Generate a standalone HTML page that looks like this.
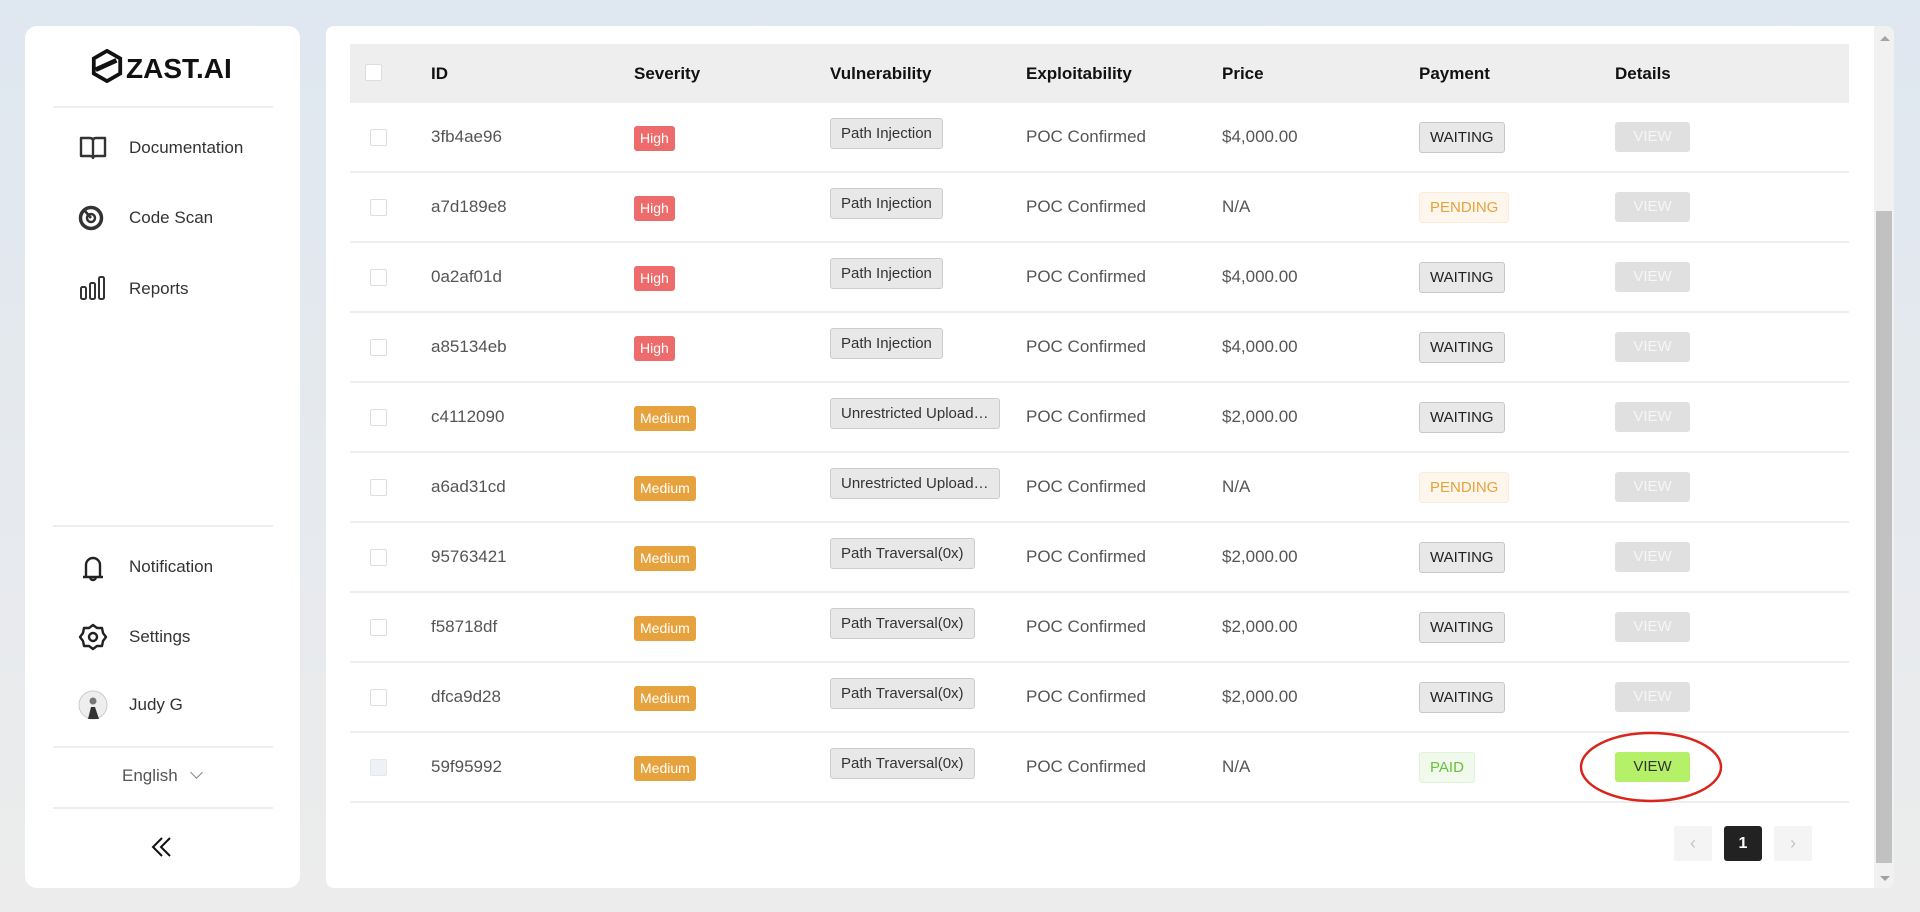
<!DOCTYPE html>
<html><head><meta charset="utf-8"><style>
*{box-sizing:border-box;margin:0;padding:0}
body{width:1920px;height:912px;overflow:hidden;background:linear-gradient(#dfe7f0,#ececec);font-family:"Liberation Sans",sans-serif;color:#333;position:relative}
.side{position:absolute;left:25px;top:26px;width:275px;height:862px;background:#fff;border-radius:12px}
.hr{position:absolute;left:28px;width:220px;height:2px;background:#eceef1}
.item{position:absolute;left:0;width:275px;height:30px;font-size:17px;color:#333}
.item .ic{position:absolute;left:53px;top:0;width:30px;height:30px}
.item span{position:absolute;left:104px;top:5px}
.main{position:absolute;left:326px;top:26px;width:1568px;height:862px;background:#fff;border-radius:8px;overflow:hidden}
.thead{position:absolute;left:24px;top:18px;width:1499px;height:59px;background:#eeeeee}
.th{position:absolute;top:20px;font-weight:bold;font-size:17px;color:#111}
.row{position:absolute;left:24px;width:1499px;height:70px;border-bottom:2px solid #eeeeee;font-size:17px;color:#555}
.cell{position:absolute;top:24px}
.cb{position:absolute;left:20px;top:26px;width:17px;height:17px;border:1px solid #ddd;border-radius:2px;background:#fff}
.sev{position:absolute;left:284px;top:23px;height:25px;padding:0 6px;border-radius:3px;color:#fff;font-size:14px;line-height:25px}
.vul{position:absolute;left:480px;top:15px;height:31px;padding:0 10px;border:1px solid #ccc;border-radius:3px;background:#e8e8e8;font-size:15px;line-height:29px;color:#333}
.pay{position:absolute;left:1069px;top:19px;height:31px;padding:0 10px;border:1px solid #c8c8c8;border-radius:3px;background:#e8e8e8;font-size:15px;line-height:29px;color:#222}
.view{position:absolute;left:1265px;top:19px;width:75px;height:30px;border-radius:3px;background:#e0e0e0;color:#f6f6f6;font-size:15px;line-height:30px;text-align:center}
</style></head><body>
<div class="side">
  <div style="position:absolute;left:65px;top:23px;width:150px;height:36px;">
    <svg width="34" height="34" viewBox="0 0 36 36" style="position:absolute;left:0;top:0"><path d="M18 2 L32 10 L32 26 L18 34 L4 26 L4 10 Z" fill="none" stroke="#111" stroke-width="4"/><path d="M6 22 L28 12" stroke="#111" stroke-width="5"/></svg>
    <span style="position:absolute;left:36px;top:4px;font-size:28px;font-weight:bold;color:#111">ZAST.AI</span>
  </div>
  <div class="hr" style="top:80px"></div>
  <div class="item" style="top:107px"><svg class="ic" viewBox="0 0 30 30"><path d="M3 5h9q3 0 3 3v17q0-2-3-2H3zM27 5h-9q-3 0-3 3v17q0-2 3-2h9z" fill="none" stroke="#333" stroke-width="2.4" stroke-linejoin="round"/></svg><span>Documentation</span></div>
  <div class="item" style="top:177px"><svg class="ic" viewBox="0 0 30 30"><circle cx="13" cy="15" r="10.5" fill="none" stroke="#333" stroke-width="3.5"/><circle cx="13" cy="15" r="4" fill="none" stroke="#333" stroke-width="2.5"/><path d="M13 15L7 8" stroke="#333" stroke-width="2.5"/></svg><span>Code Scan</span></div>
  <div class="item" style="top:248px"><svg class="ic" viewBox="0 0 30 30"><rect x="3" y="13" width="5" height="12" rx="1.5" fill="none" stroke="#333" stroke-width="2"/><rect x="12" y="9" width="5" height="16" rx="1.5" fill="none" stroke="#333" stroke-width="2"/><rect x="21" y="3" width="5" height="22" rx="1.5" fill="none" stroke="#333" stroke-width="2"/></svg><span>Reports</span></div>
  <div class="hr" style="top:499px"></div>
  <div class="item" style="top:526px"><svg class="ic" viewBox="0 0 30 30"><path d="M5 25h20M8 25V13a7 7 0 0 1 14 0v12M12 25a3 3 0 0 0 6 0" fill="none" stroke="#222" stroke-width="2.4"/></svg><span>Notification</span></div>
  <div class="item" style="top:596px"><svg class="ic" viewBox="0 0 30 30"><path d="M15 3l4 3 5 0 1 5 3 4-3 4-1 5-5 0-4 3-4-3-5 0-1-5-3-4 3-4 1-5 5 0z" fill="none" stroke="#222" stroke-width="2.4" stroke-linejoin="round"/><circle cx="15" cy="15" r="4" fill="none" stroke="#222" stroke-width="2.4"/></svg><span>Settings</span></div>
  <div class="item" style="top:664px"><svg class="ic" viewBox="0 0 30 30"><circle cx="15" cy="15" r="14" fill="#eee" stroke="#ccc"/><path d="M10 29l3-12 4 0 4 12z" fill="#333"/><circle cx="15" cy="11" r="3.5" fill="#777"/></svg><span>Judy G</span></div>
  <div class="hr" style="top:720px"></div>
  <div style="position:absolute;left:97px;top:740px;font-size:17px;color:#555">English <span style="display:inline-block;width:9px;height:9px;border-right:1.5px solid #888;border-bottom:1.5px solid #888;transform:rotate(45deg);margin:0 0 4px 10px"></span></div>
  <div class="hr" style="top:781px"></div>
  <svg style="position:absolute;left:126px;top:810px" width="22" height="22" viewBox="0 0 22 22"><path d="M11 2L2 11l9 9M19 2l-9 9 9 9" fill="none" stroke="#111" stroke-width="2"/></svg>
</div>

<div class="main">
  <div class="thead">
    <div style="position:absolute;left:15px;top:20px;width:17px;height:17px;border:1px solid #ddd;border-radius:2px;background:#fff"></div>
    <div class="th" style="left:81px">ID</div>
    <div class="th" style="left:284px">Severity</div>
    <div class="th" style="left:480px">Vulnerability</div>
    <div class="th" style="left:676px">Exploitability</div>
    <div class="th" style="left:872px">Price</div>
    <div class="th" style="left:1069px">Payment</div>
    <div class="th" style="left:1265px">Details</div>
  </div>
  <div style="position:absolute;left:0;top:77px">
  <div class="row" style="top:0"><div class="cb"></div><div class="cell" style="left:81px">3fb4ae96</div><div class="sev" style="background:#ee6b6b">High</div><div class="vul">Path Injection</div><div class="cell" style="left:676px">POC Confirmed</div><div class="cell" style="left:872px">$4,000.00</div><div class="pay">WAITING</div><div class="view">VIEW</div></div>
  <div class="row" style="top:70px"><div class="cb"></div><div class="cell" style="left:81px">a7d189e8</div><div class="sev" style="background:#ee6b6b">High</div><div class="vul">Path Injection</div><div class="cell" style="left:676px">POC Confirmed</div><div class="cell" style="left:872px">N/A</div><div class="pay" style="background:#fdf6ec;border-color:#faecd8;color:#e6a23c">PENDING</div><div class="view">VIEW</div></div>
  <div class="row" style="top:140px"><div class="cb"></div><div class="cell" style="left:81px">0a2af01d</div><div class="sev" style="background:#ee6b6b">High</div><div class="vul">Path Injection</div><div class="cell" style="left:676px">POC Confirmed</div><div class="cell" style="left:872px">$4,000.00</div><div class="pay">WAITING</div><div class="view">VIEW</div></div>
  <div class="row" style="top:210px"><div class="cb"></div><div class="cell" style="left:81px">a85134eb</div><div class="sev" style="background:#ee6b6b">High</div><div class="vul">Path Injection</div><div class="cell" style="left:676px">POC Confirmed</div><div class="cell" style="left:872px">$4,000.00</div><div class="pay">WAITING</div><div class="view">VIEW</div></div>
  <div class="row" style="top:280px"><div class="cb"></div><div class="cell" style="left:81px">c4112090</div><div class="sev" style="background:#e6a23c">Medium</div><div class="vul">Unrestricted Upload…</div><div class="cell" style="left:676px">POC Confirmed</div><div class="cell" style="left:872px">$2,000.00</div><div class="pay">WAITING</div><div class="view">VIEW</div></div>
  <div class="row" style="top:350px"><div class="cb"></div><div class="cell" style="left:81px">a6ad31cd</div><div class="sev" style="background:#e6a23c">Medium</div><div class="vul">Unrestricted Upload…</div><div class="cell" style="left:676px">POC Confirmed</div><div class="cell" style="left:872px">N/A</div><div class="pay" style="background:#fdf6ec;border-color:#faecd8;color:#e6a23c">PENDING</div><div class="view">VIEW</div></div>
  <div class="row" style="top:420px"><div class="cb"></div><div class="cell" style="left:81px">95763421</div><div class="sev" style="background:#e6a23c">Medium</div><div class="vul">Path Traversal(0x)</div><div class="cell" style="left:676px">POC Confirmed</div><div class="cell" style="left:872px">$2,000.00</div><div class="pay">WAITING</div><div class="view">VIEW</div></div>
  <div class="row" style="top:490px"><div class="cb"></div><div class="cell" style="left:81px">f58718df</div><div class="sev" style="background:#e6a23c">Medium</div><div class="vul">Path Traversal(0x)</div><div class="cell" style="left:676px">POC Confirmed</div><div class="cell" style="left:872px">$2,000.00</div><div class="pay">WAITING</div><div class="view">VIEW</div></div>
  <div class="row" style="top:560px"><div class="cb"></div><div class="cell" style="left:81px">dfca9d28</div><div class="sev" style="background:#e6a23c">Medium</div><div class="vul">Path Traversal(0x)</div><div class="cell" style="left:676px">POC Confirmed</div><div class="cell" style="left:872px">$2,000.00</div><div class="pay">WAITING</div><div class="view">VIEW</div></div>
  <div class="row" style="top:630px"><div class="cb" style="background:#eef1f6;border-color:#e4e7ed"></div><div class="cell" style="left:81px">59f95992</div><div class="sev" style="background:#e6a23c">Medium</div><div class="vul">Path Traversal(0x)</div><div class="cell" style="left:676px">POC Confirmed</div><div class="cell" style="left:872px">N/A</div><div class="pay" style="background:#f0f9eb;border-color:#e1f3d8;color:#67c23a">PAID</div><div class="view" style="background:#b4f068;color:#333">VIEW</div></div>
  </div>
  <svg style="position:absolute;left:1252px;top:704px" width="146" height="74"><ellipse cx="73" cy="37" rx="70" ry="34" fill="none" stroke="#d9261c" stroke-width="2.5"/></svg>
  <div style="position:absolute;left:1348px;top:800px;width:38px;height:35px;background:#f4f4f5;border-radius:2px;color:#c0c4cc;text-align:center;line-height:35px;font-size:18px">‹</div>
  <div style="position:absolute;left:1398px;top:800px;width:38px;height:35px;background:#222;border-radius:3px;color:#fff;text-align:center;line-height:35px;font-size:16px;font-weight:bold">1</div>
  <div style="position:absolute;left:1448px;top:800px;width:38px;height:35px;background:#f4f4f5;border-radius:2px;color:#c0c4cc;text-align:center;line-height:35px;font-size:18px">›</div>
  <div style="position:absolute;left:1548px;top:0;width:20px;height:862px;background:#f1f1f1"></div>
  <div style="position:absolute;left:1550px;top:185px;width:16px;height:652px;background:#c1c1c1"></div>
  <div style="position:absolute;left:1554px;top:10px;width:0;height:0;border-left:5px solid transparent;border-right:5px solid transparent;border-bottom:5px solid #a3a3a3"></div>
  <div style="position:absolute;left:1554px;top:850px;width:0;height:0;border-left:5px solid transparent;border-right:5px solid transparent;border-top:5px solid #a3a3a3"></div>
</div>
</body></html>
